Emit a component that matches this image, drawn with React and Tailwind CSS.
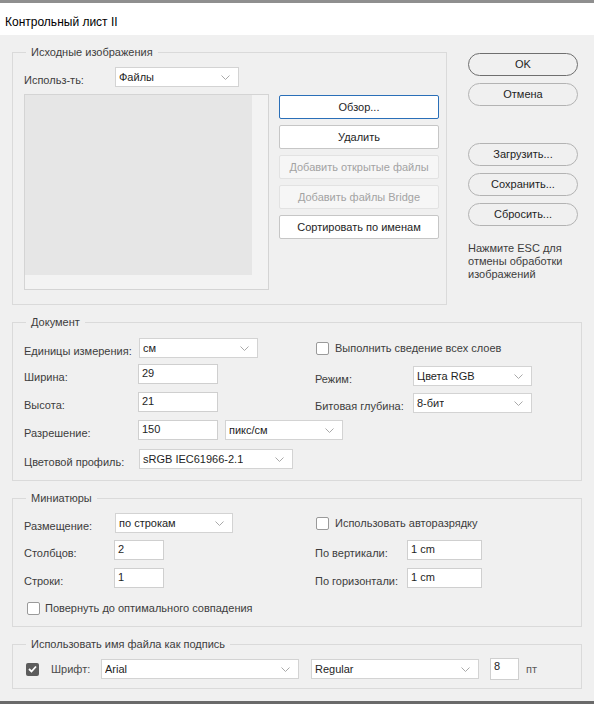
import React from 'react'

const Chevron = () => (
  <svg width="9" height="5" viewBox="0 0 9 5" className="shrink-0">
    <polyline points="0.5,0.5 4.5,4.5 8.5,0.5" fill="none" stroke="#a9a9a9" strokeWidth="1" />
  </svg>
)

const Select = ({ className, children }) => (
  <div className={`flex h-[20px] shrink-0 items-center justify-between border border-[#d3d3d3] bg-white pl-[3px] pr-[8px] text-[#1e1e1e] ${className}`}>
    <span className="truncate">{children}</span>
    <Chevron />
  </div>
)

const Field = ({ className, children }) => (
  <div className={`h-[20px] shrink-0 border border-[#cfcfcf] bg-white pl-[3px] pt-[1px] leading-[15px] text-[#1e1e1e] ${className}`}>{children}</div>
)

const Check = ({ checked }) =>
  checked ? (
    <div className="flex h-[13px] w-[13px] shrink-0 items-center justify-center rounded-[2px] bg-[#5c5c5c]">
      <svg width="9" height="8" viewBox="0 0 9 8">
        <polyline points="1,4 3.5,6.5 8,1.5" fill="none" stroke="white" strokeWidth="1.8" />
      </svg>
    </div>
  ) : (
    <div className="h-[13px] w-[13px] shrink-0 rounded-[2px] border border-[#9a9a9a] bg-white" />
  )

const Label = ({ className, children }) => (
  <div className={`shrink-0 whitespace-nowrap pt-[7px] leading-[13px] text-[#3d3d3d] ${className}`}>{children}</div>
)

const Group = ({ title, className, children }) => (
  <fieldset className={`border border-[#dadada] ${className}`}>
    <legend className="ml-[13px] px-[5px] leading-[16px] text-[#3d3d3d]">{title}</legend>
    {children}
  </fieldset>
)

const LeftButton = ({ children, variant }) => {
  const styles = {
    primary: 'border-[#2a6fb8] bg-white text-[#1e1e1e]',
    normal: 'border-[#c6c6c6] bg-white text-[#1e1e1e]',
    disabled: 'border-[#e2e2e2] bg-[#f6f6f6] text-[#a3a3a3]',
  }
  return (
    <div className={`flex h-[24px] items-center justify-center whitespace-nowrap rounded-[2px] border ${styles[variant || 'normal']}`}>{children}</div>
  )
}

const PillButton = ({ children, main, className }) => (
  <div
    className={`flex h-[23px] items-center justify-center rounded-full border text-[#1e1e1e] ${main ? 'border-[#6f6f6f]' : 'border-[#b3b3b3]'} ${className}`}
  >
    {children}
  </div>
)

export default function App() {
  return (
    <div className="flex h-[704px] w-[594px] flex-col border-t-[3px] border-b-[3px] border-t-[#8f8f8f] border-b-[#6a6a6a] bg-[#f0f0f0] font-['Liberation_Sans',Arial,sans-serif] text-[11px]">
      <div className="flex h-[32px] shrink-0 items-center bg-white pl-[5px] pt-[5px] text-[12px] text-black">Контрольный лист II</div>

      <div className="flex-1 px-[12px]">
        <div className="flex items-start">
          <Group title="Исходные изображения" className="mt-[9px] w-[434px]">
            <div className="pb-[14px] pl-[11px] pr-[7px] pt-[7px]">
              <div className="flex items-start">
                <Label className="w-[91px]">Использ-ть:</Label>
                <Select className="w-[124px]">Файлы</Select>
              </div>
              <div className="mt-[7px] flex gap-[10px]">
                <div className="h-[196px] w-[245px] shrink-0 border border-[#d4d4d4] bg-[#f3f3f3]">
                  <div className="h-[180px] w-[227px] bg-[#e6e6e6]" />
                </div>
                <div className="mt-[1px] flex w-[160px] flex-col gap-[6px]">
                  <LeftButton variant="primary">Обзор...</LeftButton>
                  <LeftButton>Удалить</LeftButton>
                  <LeftButton variant="disabled">Добавить открытые файлы</LeftButton>
                  <LeftButton variant="disabled">Добавить файлы Bridge</LeftButton>
                  <LeftButton>Сортировать по именам</LeftButton>
                </div>
              </div>
            </div>
          </Group>

          <div className="ml-[21px] flex w-[110px] flex-col pt-[18px]">
            <PillButton main>OK</PillButton>
            <PillButton className="mt-[7px]">Отмена</PillButton>
            <PillButton className="mt-[37px]">Загрузить...</PillButton>
            <PillButton className="mt-[7px]">Сохранить...</PillButton>
            <PillButton className="mt-[7px]">Сбросить...</PillButton>
            <div className="mt-[16px] w-[120px] leading-[13px] text-[#3d3d3d]">
              Нажмите ESC для
              <br />
              отмены обработки
              <br />
              изображений
            </div>
          </div>
        </div>

        <Group title="Документ" className="mt-[9px]">
          <div className="flex pb-[11px] pl-[11px] pt-[8px]">
            <div className="flex w-[291px] flex-col">
              <div className="flex items-start">
                <Label className="w-[115px]">Единицы измерения:</Label>
                <Select className="w-[119px]">см</Select>
              </div>
              <div className="mt-[6px] flex items-start">
                <Label className="w-[114px]">Ширина:</Label>
                <Field className="w-[80px]">29</Field>
              </div>
              <div className="mt-[8px] flex items-start">
                <Label className="w-[114px]">Высота:</Label>
                <Field className="w-[80px]">21</Field>
              </div>
              <div className="mt-[8px] flex items-start">
                <Label className="w-[114px]">Разрешение:</Label>
                <Field className="w-[80px]">150</Field>
                <Select className="ml-[7px] w-[118px]">пикс/см</Select>
              </div>
              <div className="mt-[9px] flex items-start">
                <Label className="w-[115px]">Цветовой профиль:</Label>
                <Select className="w-[154px]">sRGB IEC61966-2.1</Select>
              </div>
            </div>
            <div className="flex flex-col">
              <div className="flex h-[20px] items-center pl-[1px]">
                <Check />
                <span className="ml-[6px] text-[#3d3d3d]">Выполнить сведение всех слоев</span>
              </div>
              <div className="mt-[8px] flex items-start">
                <Label className="w-[98px]">Режим:</Label>
                <Select className="w-[119px]">Цвета RGB</Select>
              </div>
              <div className="mt-[7px] flex items-start">
                <Label className="w-[98px]">Битовая глубина:</Label>
                <Select className="w-[119px]">8-бит</Select>
              </div>
            </div>
          </div>
        </Group>

        <Group title="Миниатюры" className="mt-[9px]">
          <div className="flex pb-[11px] pl-[11px] pt-[7px]">
            <div className="flex w-[291px] flex-col">
              <div className="flex items-start">
                <Label className="w-[91px]">Размещение:</Label>
                <Select className="w-[118px]">по строкам</Select>
              </div>
              <div className="mt-[7px] flex items-start">
                <Label className="w-[90px]">Столбцов:</Label>
                <Field className="w-[50px]">2</Field>
              </div>
              <div className="mt-[8px] flex items-start">
                <Label className="w-[90px]">Строки:</Label>
                <Field className="w-[50px]">1</Field>
              </div>
              <div className="mt-[14px] flex h-[13px] items-center pl-[3px]">
                <Check />
                <span className="ml-[5px] text-[#3d3d3d]">Повернуть до оптимального совпадения</span>
              </div>
            </div>
            <div className="flex flex-col">
              <div className="flex h-[20px] items-center pl-[1px]">
                <Check />
                <span className="ml-[6px] text-[#3d3d3d]">Использовать авторазрядку</span>
              </div>
              <div className="mt-[7px] flex items-start">
                <Label className="w-[92px]">По вертикали:</Label>
                <Field className="w-[75px]">1 cm</Field>
              </div>
              <div className="mt-[8px] flex items-start">
                <Label className="w-[92px]">По горизонтали:</Label>
                <Field className="w-[75px]">1 cm</Field>
              </div>
            </div>
          </div>
        </Group>

        <Group title="Использовать имя файла как подпись" className="mt-[9px]">
          <div className="flex items-center pb-[8px] pl-[11px] pt-[6px]">
            <div className="ml-[2px]">
              <Check checked />
            </div>
            <span className="ml-[12px] w-[50px] text-[#4a4a4a]">Шрифт:</span>
            <Select className="w-[198px]">Arial</Select>
            <Select className="ml-[12px] w-[168px]">Regular</Select>
            <div className="ml-[11px] h-[22px] w-[29px] shrink-0 border border-[#cfcfcf] bg-white pl-[3px] leading-[15px] text-[#1e1e1e]">8</div>
            <span className="ml-[7px] text-[#5a5a5a]">пт</span>
          </div>
        </Group>
      </div>
    </div>
  )
}
